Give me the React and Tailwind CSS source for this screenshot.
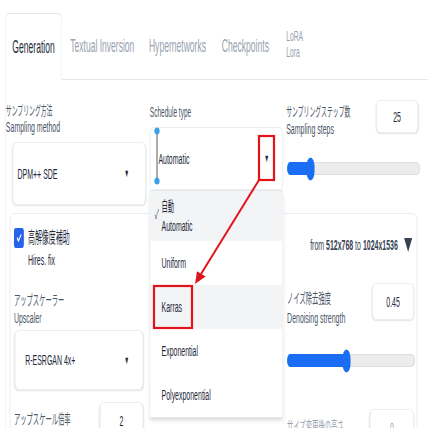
import React from 'react';

const Caret = () => <span className="text-[11px] text-gray-800">▼</span>;

const Slider = ({ fill }) => (
  <div className="relative h-[13px] rounded-full bg-[#ececec] border border-[#d4d4d8]">
    <div className="absolute left-[-1px] top-[-1px] bottom-[-1px] rounded-l-full bg-[#1b6ef3]" style={{ width: fill }} />
    <div className="absolute top-1/2 -translate-y-1/2 -translate-x-1/2 w-[18px] h-[23px] rounded-full bg-[#1b6ef3]" style={{ left: fill }} />
  </div>
);

const NumBox = ({ value, className }) => (
  <div className={`flex items-center justify-center border border-gray-200 rounded-lg shadow-sm text-[15.5px] ${className}`}>
    {value}
  </div>
);

const options = [
  { jp: '自動', en: 'Automatic', checked: true },
  { en: 'Uniform' },
  { en: 'Karras', hover: true },
  { en: 'Exponential' },
  { en: 'Polyexponential' },
];

export default function App() {
  return (
    <div className="relative w-[428px] h-[428px] overflow-hidden bg-white">
      <div className="relative w-[951px] h-[428px] origin-top-left scale-x-[0.45] font-['Liberation_Sans','Noto_Sans_CJK_JP',sans-serif]">
        {/* Tabs */}
        <div className="flex h-[80px] pt-[13px] pl-[11px]">
          <div className="w-[127px] border border-b-0 border-gray-200 rounded-t-lg flex items-center justify-center text-[19px] text-gray-800">
            Generation
          </div>
          <div className="flex-1 flex items-center pl-[18px] border-b border-gray-200 text-[19px] text-gray-400">
            <span className="w-[175px]">Textual Inversion</span>
            <span className="w-[162px]">Hypernetworks</span>
            <span className="w-[143px]">Checkpoints</span>
            <span className="flex flex-col text-[15px] leading-[16px] mt-[-4px]">
              <span>LoRA</span>
              <span>Lora</span>
            </span>
          </div>
        </div>

        <div className="ml-[11px] border-l border-gray-200 h-[348px]">
          {/* Row 1 */}
          <div className="flex h-[133px]">
            <div className="w-[321px] flex flex-col pl-[1px] pt-[23px]">
              <span className="text-[13px] leading-[16px] text-gray-600">サンプリング方法</span>
              <span className="text-[15.5px] leading-[16px] text-gray-600">Sampling method</span>
              <div className="mt-[7px] ml-[15px] mr-[9px] h-[63px] border border-gray-200 rounded-lg shadow-sm flex items-center justify-between pl-[10px] pr-[36px] text-[15.5px] text-gray-800">
                <span>DPM++ SDE</span>
                <Caret />
              </div>
            </div>
            <div className="w-[296px] flex flex-col pt-[24px]">
              <span className="text-[14.5px] leading-[16px] text-gray-600">Schedule type</span>
              <div className="mt-[7px] h-[63px] border border-gray-200 rounded-lg flex items-center justify-between pl-[18px] pr-[30px] text-[15.5px] text-gray-800">
                <span>Automatic</span>
                <Caret />
              </div>
            </div>
            <div className="w-[297px] ml-[7px] flex flex-col pt-[20px]">
              <div className="flex justify-between">
                <div className="flex flex-col mt-[3px]">
                  <span className="text-[13px] leading-[17px] text-gray-600">サンプリングステップ数</span>
                  <span className="text-[15.5px] leading-[17px] text-gray-600">Sampling steps</span>
                </div>
                <NumBox value="25" className="w-[93px] h-[33px] mr-[4px] text-gray-800" />
              </div>
              <div className="mt-[25px] ml-[2px]">
                <Slider fill="51px" />
              </div>
            </div>
          </div>

          {/* Row 2: hires fix panel */}
          <div className="ml-[10px] w-[905px] h-[240px] border border-gray-200 rounded-lg">
            <div className="flex justify-between pt-[14px] pl-[8px] pr-[10px] h-[66px]">
              <div className="flex gap-[9px]">
                <div className="w-[22px] h-[20px] rounded bg-[#2563eb] flex items-center justify-center">
                  <svg width="15" height="14" viewBox="0 0 24 24" fill="none" stroke="white" strokeWidth="3.5" strokeLinecap="round" strokeLinejoin="round">
                    <path d="M5 12.5l4.5 4.5L19 7" />
                  </svg>
                </div>
                <div className="flex flex-col">
                  <span className="text-[15.5px] leading-[20px] text-gray-800">高解像度補助</span>
                  <span className="text-[15.5px] leading-[24px] text-gray-800">Hires. fix</span>
                </div>
              </div>
              <div className="flex items-center gap-[14px] h-[32px] mt-[1px] text-[15.5px] text-gray-700">
                <span>
                  from <b className="font-bold">512x768</b> to <b className="font-bold">1024x1536</b>
                </span>
                <svg width="18" height="14" viewBox="0 0 18 14">
                  <polygon points="0,0 18,0 9,14" fill="#374151" />
                </svg>
              </div>
            </div>
            <div className="flex">
              <div className="w-[295px] flex flex-col pl-[8px]">
                <span className="mt-[11px] text-[14px] leading-[18px] text-gray-600">アップスケーラー</span>
                <span className="text-[15.5px] leading-[18px] text-gray-600">Upscaler</span>
                <div className="mt-[3px] ml-[2px] h-[60px] border border-gray-200 rounded-lg shadow-sm flex items-center justify-between pl-[22px] pr-[30px] text-[15.5px] text-gray-800">
                  <span>R-ESRGAN 4x+</span>
                  <Caret />
                </div>
                <div className="flex justify-between items-start mt-[12px]">
                  <span className="mt-[8px] text-[14px] leading-[18px] text-gray-600">アップスケール倍率</span>
                  <NumBox value="2" className="w-[96px] h-[37px] text-gray-800" />
                </div>
              </div>
              <div className="w-[320px]" />
              <div className="w-[284px] flex flex-col">
                <div className="flex justify-between mt-[3px]">
                  <div className="flex flex-col mt-[5px]">
                    <span className="text-[14px] leading-[20px] text-gray-600">ノイズ除去強度</span>
                    <span className="text-[15.5px] leading-[20px] text-gray-600">Denoising strength</span>
                  </div>
                  <NumBox value="0.45" className="w-[93px] h-[37px] mr-[2px] text-gray-800" />
                </div>
                <div className="mt-[26px]">
                  <Slider fill="131px" />
                </div>
                <div className="flex justify-between items-start mt-[42px]">
                  <span className="mt-[8px] text-[14px] leading-[18px] text-gray-400">サイズ変更後の高さ</span>
                  <NumBox value="0" className="w-[98px] h-[37px] mr-[2px] text-gray-400" />
                </div>
              </div>
            </div>
          </div>
        </div>

        {/* Schedule type dropdown list */}
        <div className="absolute left-[333px] top-[190px] w-[296px] bg-white border border-gray-200 shadow-md">
          {options.map((o) => (
            <div
              key={o.en}
              className={`relative flex flex-col justify-center pl-[25px] text-[15.5px] text-gray-800 ${o.jp ? 'h-[50px] bg-[#f3f4f6]' : 'h-[44px]'} ${o.hover ? 'bg-[#f3f4f6]' : ''}`}
            >
              {o.checked && <span className="absolute left-[10px] top-[14px] text-[13px] text-gray-700">✓</span>}
              {o.jp && <span className="text-[14px] leading-[20px]">{o.jp}</span>}
              <span className="leading-[20px]">{o.en}</span>
            </div>
          ))}
        </div>
      </div>

      {/* Annotations */}
      <svg className="absolute inset-0 pointer-events-none" width="428" height="428" viewBox="0 0 428 428">
        <line x1="157" y1="132" x2="157" y2="180" stroke="#333" strokeWidth="0.8" />
        <ellipse cx="157" cy="131" rx="2.6" ry="3.6" fill="#3ea0e8" />
        <ellipse cx="157" cy="181" rx="2.6" ry="3.6" fill="#3ea0e8" />
        <rect x="259" y="136" width="15" height="44" fill="none" stroke="#e1141c" strokeWidth="2.2" />
        <rect x="154" y="286" width="38" height="42" fill="none" stroke="#e1141c" strokeWidth="2.2" />
        <line x1="259" y1="180" x2="201" y2="274" stroke="#e1141c" strokeWidth="2" />
        <polygon points="195,284 205.6,276.4 197,271.2" fill="#e1141c" />
      </svg>
    </div>
  );
}
